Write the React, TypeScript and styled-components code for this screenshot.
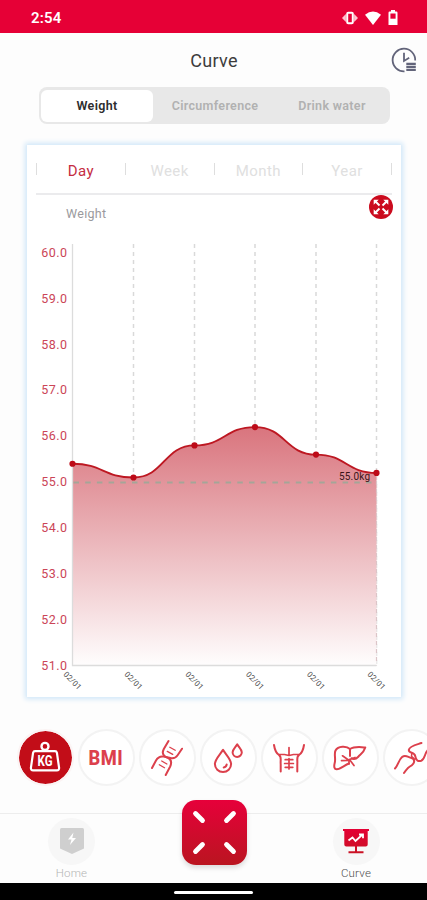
import React from 'react';
import styled, { createGlobalStyle } from 'styled-components';

const GlobalStyle = createGlobalStyle`
  * { box-sizing: border-box; }
  body { margin: 0; background: #fdfdfd; font-family: Roboto, "Liberation Sans", sans-serif; }
  button { font: inherit; border: 0; padding: 0; background: none; }
  svg { display: block; overflow: visible; }
`;

const Screen = styled.div`
  width: 427px;
  height: 900px;
  overflow: hidden;
  display: flex;
  flex-direction: column;
  background: #fdfdfd;
`;

const StatusBar = styled.header`
  height: 33px;
  flex: none;
  display: flex;
  align-items: center;
  justify-content: space-between;
  padding: 2px 29px 0 31px;
  background: #e60036;
  color: #fff;
  font-size: 15px;
  font-weight: 600;
  letter-spacing: 0.2px;
`;

const StatusIcons = styled.div`
  display: flex;
  align-items: center;
  gap: 7px;
`;

const TitleBar = styled.div`
  height: 54px;
  flex: none;
  display: grid;
  grid-template-columns: 40px 1fr 40px;
  align-items: center;
  padding: 0 10px 0 11px;
`;

const Title = styled.h1`
  grid-column: 2;
  margin: 0;
  text-align: center;
  font-size: 18px;
  font-weight: 400;
  color: #3c3c3c;
  letter-spacing: 0.3px;
`;

const HistoryButton = styled.button`
  justify-self: end;
`;

const Segments = styled.div`
  flex: none;
  display: grid;
  grid-template-columns: 112px 124px 1fr;
  width: 351px;
  height: 37px;
  margin-left: 38.5px;
  padding: 2.5px;
  border-radius: 8px;
  background: #e8e8e8;
`;

const Segment = styled.button<{ $active?: boolean }>`
  border-radius: 6px;
  background: ${(p) => (p.$active ? '#fff' : 'transparent')};
  color: ${(p) => (p.$active ? '#2d2d2d' : '#b1b1b1')};
  font-size: 12.5px;
  font-weight: 600;
  letter-spacing: 0.32px;
`;

const Card = styled.section`
  flex: none;
  width: 374px;
  height: 552px;
  margin: 21px 0 0 27px;
  display: flex;
  flex-direction: column;
  background: #fff;
  box-shadow: 0 0 5px 2px #cfe6f8;
`;

const Periods = styled.nav`
  height: 50px;
  flex: none;
  display: flex;
  justify-content: space-between;
  align-items: center;
  margin: 0 9px;
  border-bottom: 2px solid #ebebed;
`;

const Period = styled.button<{ $active?: boolean }>`
  flex: 1;
  padding-top: 3px;
  font-size: 15px;
  letter-spacing: 0.45px;
  font-weight: 400;
  color: ${(p) => (p.$active ? '#c52c42' : '#e0e0e0')};
`;

const Divider = styled.i`
  width: 1px;
  height: 12px;
  background: #dedede;
`;

const ChartHeader = styled.div`
  height: 35px;
  flex: none;
  display: flex;
  justify-content: space-between;
  align-items: flex-start;
  padding: 0 8px 0 39px;
`;

const Metric = styled.span`
  padding-top: 11px;
  font-size: 12.5px;
  line-height: 15px;
  letter-spacing: 0.3px;
  color: #9a9a9d;
`;

const Plot = styled.svg`
  flex: none;
  width: 374px;
  height: 467px;
  font-family: Roboto, sans-serif;
`;

const TickLabel = styled.text`
  font-size: 12.5px;
  letter-spacing: 0.45px;
  fill: #cb4557;
  text-anchor: end;
`;

const DateLabel = styled.text`
  font-size: 7.8px;
  fill: #4c4c4c;
  text-anchor: middle;
`;

const LimitLabel = styled.text`
  font-size: 10px;
  fill: #3a1418;
  text-anchor: end;
`;

const Metrics = styled.div`
  flex: none;
  display: flex;
  gap: 4px;
  margin-top: 32px;
  padding-left: 16.5px;
`;

const MetricButton = styled.button<{ $active?: boolean }>`
  flex: none;
  display: grid;
  place-items: center;
  width: 57px;
  height: 57px;
  border-radius: 50%;
  border: 2px solid ${(p) => (p.$active ? '#fbf4f4' : '#f3f3f3')};
  background: ${(p) => (p.$active ? '#c20d18' : '#fff')};
  background-clip: padding-box;
  color: #dc404c;
`;

const BmiText = styled.span`
  font-family: Roboto, sans-serif;
  font-size: 21px;
  font-weight: 800;
  line-height: 24px;
  letter-spacing: 0.6px;
  transform: scaleX(0.87);
`;

const TabBar = styled.nav`
  flex: none;
  height: 70px;
  margin-top: 27px;
  border-top: 1px solid #ededed;
  display: grid;
  grid-template-columns: 143px 1fr 142px;
  justify-items: center;
  background: #fdfdfd;
`;

const Tab = styled.button<{ $active?: boolean }>`
  display: flex;
  flex-direction: column;
  align-items: center;
  justify-content: flex-start;
  padding-top: 4px;
  font-size: 11.5px;
  line-height: 16px;
  letter-spacing: 0.2px;
  font-weight: 300;
  color: ${(p) => (p.$active ? '#4e4e4e' : '#b4b4b4')};
`;

const TabIcon = styled.span`
  display: grid;
  place-items: center;
  width: 47px;
  height: 47px;
  padding-bottom: 1px;
  border-radius: 50%;
  background: #f7f7f7;
`;

const ScanButton = styled.button`
  display: grid;
  place-items: center;
  width: 65px;
  height: 65px;
  margin-top: -14px;
  border-radius: 14px;
  background: linear-gradient(#e6003a, #ba1520);
  box-shadow: 0 3px 5px #0002;
`;

const SystemBar = styled.footer`
  flex: 1;
  display: flex;
  justify-content: center;
  align-items: center;
  padding-top: 2px;
  background: #000;
`;

const HomeIndicator = styled.span`
  width: 79px;
  height: 3px;
  border-radius: 2px;
  background: #fff;
`;

const HistoryIcon = () => (
  <svg width="26" height="26" viewBox="0 0 26 26" fill="none" stroke="#62647a" strokeWidth="1.8">
    <path d="M24.2 13.5A11.3 11.3 0 1 0 13.5 24.3" />
    <path d="M13 5.7v8.2l5.2-3.1" />
    <path d="M15.3 16.9h9.5M15.3 19.9h9.5M15.3 22.9h9.5" strokeWidth="2.2" />
  </svg>
);

const ExpandIcon = () => (
  <svg width="24" height="24" viewBox="0 0 24 24">
    <circle cx="12" cy="12" r="12" fill="#cb0b1e" />
    {[0, 90, 180, 270].map((a) => (
      <g key={a} transform={`rotate(${a} 12 12)`}>
        <path d="M4.7 4.7h5L4.7 9.7z" fill="#fff" />
        <path d="M6.5 6.5l4 4" stroke="#fff" strokeWidth="2" />
      </g>
    ))}
  </svg>
);

// Chart geometry, in card coordinates
const GRID_X = [45.5, 106.5, 167.5, 228, 289, 349.5];
const TOP = 14;
const BOTTOM = 435.5;
const STEP = 45.85;
const yOf = (value: number) => BOTTOM - (value - 51) * STEP;
const VALUES = [55.4, 55.1, 55.8, 56.2, 55.6, 55.2];
const TICKS = [60, 59, 58, 57, 56, 55, 54, 53, 52, 51];

const points = VALUES.map((v, i) => ({ x: GRID_X[i], y: yOf(v) }));
const curve = points.reduce((d, p, i) => {
  if (i === 0) return `M${p.x} ${p.y}`;
  const prev = points[i - 1];
  const mid = (prev.x + p.x) / 2;
  return `${d} C${mid} ${prev.y} ${mid} ${p.y} ${p.x} ${p.y}`;
}, '');

const WeightChart = () => (
  <Plot viewBox="0 0 374 467">
    <defs>
      <linearGradient id="area" x1="0" y1={yOf(56.2)} x2="0" y2={BOTTOM} gradientUnits="userSpaceOnUse">
        <stop offset="0" stopColor="#d5656f" stopOpacity="0.9" />
        <stop offset="1" stopColor="#d5656f" stopOpacity="0.01" />
      </linearGradient>
    </defs>
    {GRID_X.slice(1).map((x) => (
      <path key={x} d={`M${x} ${TOP}V${BOTTOM}`} stroke="#d9d9d9" strokeWidth="1.5" strokeDasharray="4 4" />
    ))}
    <path d={`${curve} V${BOTTOM} H${GRID_X[0]} Z`} fill="#fff" />
    <path d={`${curve} V${BOTTOM} H${GRID_X[0]} Z`} fill="url(#area)" />
    <path d={`M${GRID_X[5]} ${yOf(55.2)}V${BOTTOM}`} stroke="#dcc5c8" strokeWidth="1.2" strokeDasharray="4 4" />
    <path d={`M${GRID_X[0]} ${TOP}V${BOTTOM}H${GRID_X[5]}`} fill="none" stroke="#dcdcdc" strokeWidth="1.3" />
    <path d={`M${GRID_X[0] + 1} ${yOf(55) + 0.4}H${GRID_X[5]}`} stroke="#a5a598" strokeWidth="2" strokeDasharray="5.5 6.2" />
    <path d={curve} fill="none" stroke="#bd1822" strokeWidth="1.9" />
    {points.map((p) => (
      <circle key={p.x} cx={p.x} cy={p.y} r="3.1" fill="#bd0b18" />
    ))}
    <LimitLabel x="343" y="249.5" textLength="31">55.0kg</LimitLabel>
    {TICKS.map((t) => (
      <TickLabel key={t} x="40.5" y={yOf(t) + 4}>{t.toFixed(1)}</TickLabel>
    ))}
    {GRID_X.map((x) => (
      <DateLabel key={x} transform={`translate(${x - 2} 452.5) rotate(46)`} textLength="21.5">02/01</DateLabel>
    ))}
  </Plot>
);

const LineIcon = styled.svg`
  width: 34px;
  height: 34px;
  fill: none;
  stroke: currentColor;
  stroke-width: 2;
  stroke-linecap: round;
  stroke-linejoin: round;
`;

const KgText = styled.text`
  font-size: 15.5px;
  font-weight: 700;
  fill: #fff;
  stroke: none;
  text-anchor: middle;
`;

const WeightIcon = () => (
  <LineIcon viewBox="0 0 34 34" color="#fff">
    <circle cx="17" cy="5.4" r="3.5" strokeWidth="2.4" />
    <path d="M7 10.2h20q1.5 0 1.9 1.5l2.2 15.2q.1 2.5-2.2 2.5H5.1q-2.3 0-2.2-2.5L5.1 11.7Q5.5 10.2 7 10.2z" strokeWidth="2.2" />
    <KgText x="17" y="25.4" textLength="15" lengthAdjust="spacingAndGlyphs">KG</KgText>
  </LineIcon>
);

const DnaIcon = () => (
  <LineIcon viewBox="0 0 34 34">
    <path d="M18.5 0L13.8 8Q11.2 13.3 15.3 15.6L18.8 17.4Q22.6 20 20.2 25.5L15.7 34" />
    <path d="M32 7.7L27.6 14.2Q25 18 20.5 17L13.5 15.5Q8.5 14.8 6 19.5L2 27" />
    <path d="M19.8 6.3l5.4 3M17.3 10.4l5.4 3M11.7 20l5.2 3M9.3 23.8l5.2 3" strokeWidth="1.3" />
  </LineIcon>
);

const DropsIcon = () => (
  <LineIcon viewBox="0 0 34 34">
    <path d="M12 8.8C9.2 13.5 3.9 18.2 3.9 23a8.1 8.1 0 0 0 16.2 0C20.1 18.2 14.8 13.5 12 8.8z" />
    <path d="M26.2 3.3c-1.8 3.2-4.6 5.2-4.6 8a4.6 4.6 0 0 0 9.2 0c0-2.8-2.8-4.8-4.6-8z" />
    <path d="M15.7 23.5q-.5 2.5-3 3" />
  </LineIcon>
);

const AbsIcon = () => (
  <LineIcon viewBox="0 0 34 34">
    <path d="M2 4c.7 4.5 1.8 8 5 10c2.8 1.5 1.3 5 1.7 9v7.5M32 4c-.7 4.5-1.8 8-5 10c-2.8 1.5-1.3 5-1.7 9v7.5" />
    <path d="M7 13.5h5.5l4.5 1l4.5-1H27M17 6.5V13" strokeWidth="1.7" />
    <path d="M17 17.5v10.5M13.2 18.7h7.6M12.6 22.5h8.8M13.2 26.3h7.6" strokeWidth="1.7" />
  </LineIcon>
);

const LiverIcon = () => (
  <LineIcon viewBox="0 0 34 34">
    <path d="M17 8C13.5 4.5 5 4.8 2.5 9.5C.8 13 3 18 1.7 22c-1 4-.3 6.3 2 6.2c4.3-.2 7.8-4.3 12.3-5.7" />
    <path d="M17 8c4.5-2.8 10-2 15.3-1.5c-1.5 5-4.5 6.5-7 9.2c-2.2 2.3-4.5 3-6.8 1.5M17 8v7" />
    <path d="M9.5 14.8l6 4.2l6.5-2.5M15 19.3l-6.5.4M16.5 18.5l4.5 6M16 19v4" strokeWidth="1.7" />
  </LineIcon>
);

const JointIcon = () => (
  <LineIcon viewBox="0 0 34 34">
    <path d="M27.5 2C23 3.5 15.5 4.8 14.8 8.8C14.5 12.5 20.5 11 21.2 15C22 19.5 24 20.7 27.2 19.8C31 18.5 30.5 12 34 9" />
    <path d="M1 27.5C4 24.5 4.8 18.5 8.3 15.8C11.8 13.5 14 16.3 17.5 17C21.5 18.2 20.5 22.5 17.7 24.3C14.5 25.7 12 29 10 32" />
    <path d="M17.8 12.7l-.3 2.5l3.5 3.3" strokeWidth="1.5" />
  </LineIcon>
);

export default function App() {
  return (
    <>
      <GlobalStyle />
      <Screen>
        <StatusBar>
          <span>2:54</span>
          <StatusIcons>
            <svg width="16" height="14" viewBox="0 0 16 14" fill="#ffc4d0">
              <rect x="5.2" y="1.8" width="5.6" height="10.4" rx="1" fill="none" stroke="#fff" strokeWidth="2" />
              <path d="M3.9 3v8L0 7zM12.1 3v8L16 7z" />
            </svg>
            <svg width="16" height="14" viewBox="0 0 16 14" fill="#fff">
              <path d="M0 3.8Q8-3 16 3.8L8 14z" />
            </svg>
            <svg width="10" height="15" viewBox="0 0 10 15">
              <path d="M3 0h4v1.5h1.3q1.2 0 1.2 1.2V15h-9V2.7Q.5 1.5 1.7 1.5H3z" fill="#fff" />
              <path d="M2.4 3.5h5.2v5.2H2.4z" fill="#e60036" />
            </svg>
          </StatusIcons>
        </StatusBar>

        <TitleBar>
          <Title>Curve</Title>
          <HistoryButton aria-label="History"><HistoryIcon /></HistoryButton>
        </TitleBar>

        <Segments>
          <Segment $active>Weight</Segment>
          <Segment>Circumference</Segment>
          <Segment>Drink water</Segment>
        </Segments>

        <Card>
          <Periods>
            <Divider />
            {['Day', 'Week', 'Month', 'Year'].map((name, i) => (
              <React.Fragment key={name}>
                <Period $active={i === 0}>{name}</Period>
                <Divider />
              </React.Fragment>
            ))}
          </Periods>
          <ChartHeader>
            <Metric>Weight</Metric>
            <button aria-label="Expand chart"><ExpandIcon /></button>
          </ChartHeader>
          <WeightChart />
        </Card>

        <Metrics>
          <MetricButton $active><WeightIcon /></MetricButton>
          <MetricButton><BmiText>BMI</BmiText></MetricButton>
          <MetricButton><DnaIcon /></MetricButton>
          <MetricButton><DropsIcon /></MetricButton>
          <MetricButton><AbsIcon /></MetricButton>
          <MetricButton><LiverIcon /></MetricButton>
          <MetricButton><JointIcon /></MetricButton>
        </Metrics>

        <TabBar>
          <Tab>
            <TabIcon>
              <svg width="24" height="26" viewBox="0 0 24 26">
                <path d="M1.5 0h21Q24 0 24 1.5V20.5L12 26L0 20.5V1.5Q0 0 1.5 0z" fill="#cfcfcf" />
                <path d="M13.5 4.5L8 11.5h3.5L10 17l6-7h-3.7z" fill="#fff" />
              </svg>
            </TabIcon>
            Home
          </Tab>
          <ScanButton aria-label="Measure">
            <svg width="65" height="65" viewBox="0 0 65 65" stroke="#fff" strokeWidth="4.8" strokeLinecap="round">
              <path d="M13.5 13.5l7 7M51.5 13.5l-7 7M13.5 51.5l7-7M51.5 51.5l-7-7" />
            </svg>
          </ScanButton>
          <Tab $active>
            <TabIcon>
              <svg width="26" height="26" viewBox="0 0 26 26">
                <defs>
                  <linearGradient id="board" x1="0" y1="0" x2="0" y2="1">
                    <stop offset="0" stopColor="#e40034" />
                    <stop offset="1" stopColor="#c91224" />
                  </linearGradient>
                </defs>
                <path d="M0 1h26v2h-1.3v13.5q0 2-2 2H3.3q-2 0-2-2V3H0zM12 18h2v5.3h6.5v2h-15v-2H12z" fill="url(#board)" />
                <path d="M5.5 12.5l4-3 3 3.5 6.5-6M16 6.5h4v3.8" fill="none" stroke="#fff" strokeWidth="1.8" />
              </svg>
            </TabIcon>
            Curve
          </Tab>
        </TabBar>

        <SystemBar><HomeIndicator /></SystemBar>
      </Screen>
    </>
  );
}
